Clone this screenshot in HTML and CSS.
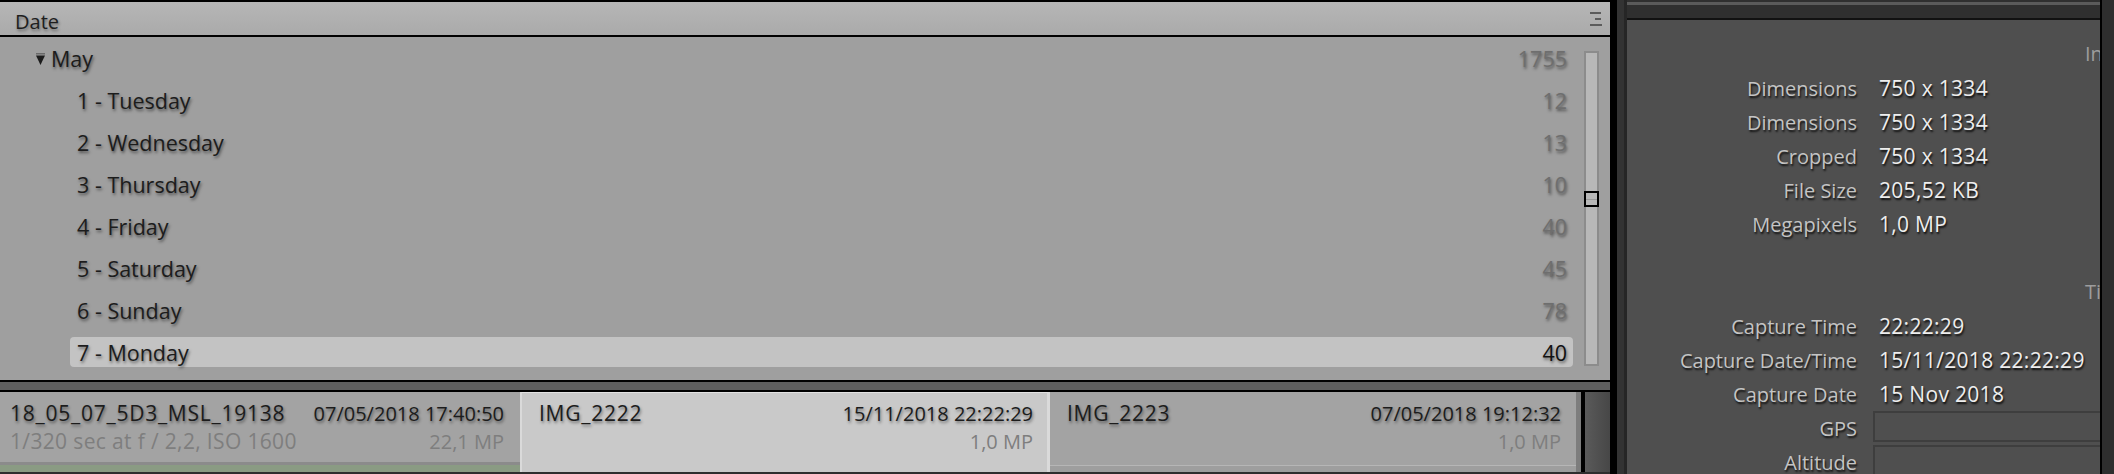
FILE: index.html
```html
<!DOCTYPE html>
<html>
<head>
<link rel="stylesheet" href="styles.css">
</head>
<body>

<div class="app">
    <div class="library">
        <div class="filter-head">
            <span>Date</span>
            <svg class="menu-icon" width="12" height="14" viewBox="0 0 12 14">
                <rect x="0" y="0" width="11" height="2" fill="#5c5c5c"/>
                <rect x="5" y="6" width="6" height="2" fill="#5c5c5c"/>
                <rect x="0" y="12" width="12" height="2" fill="#5c5c5c"/>
            </svg>
        </div>

        <div class="date-list">
            <div class="rows">
                <div class="row month">
                    <span class="label">
                        <svg class="twisty" width="9" height="12" viewBox="0 0 9 12">
                            <rect x="0" y="0" width="9" height="1.5" fill="#6a6a6a"/>
                            <polygon points="0,2.5 9,2.5 4.5,12" fill="#1c1c1c"/>
                        </svg>May</span>
                    <span class="count">1755</span>
                </div>
                <div class="row"><span class="label">1 - Tuesday</span><span class="count">12</span></div>
                <div class="row"><span class="label">2 - Wednesday</span><span class="count">13</span></div>
                <div class="row"><span class="label">3 - Thursday</span><span class="count">10</span></div>
                <div class="row"><span class="label">4 - Friday</span><span class="count">40</span></div>
                <div class="row"><span class="label">5 - Saturday</span><span class="count">45</span></div>
                <div class="row"><span class="label">6 - Sunday</span><span class="count">78</span></div>
                <div class="row selected"><span class="label">7 - Monday</span><span class="count">40</span></div>
            </div>
            <div class="scroll">
                <div class="thumb"></div>
            </div>
        </div>

        <div class="split"></div>

        <div class="strip">
            <div class="cell first">
                <div class="cell-line"><span class="name">18_05_07_5D3_MSL_19138</span><span>07/05/2018 17:40:50</span></div>
                <div class="cell-line sub"><span class="exposure">1/320 sec at f / 2,2, ISO 1600</span><span>22,1 MP</span></div>
            </div>
            <div class="cell active">
                <div class="cell-line"><span class="name">IMG_2222</span><span>15/11/2018 22:22:29</span></div>
                <div class="cell-line sub"><span></span><span>1,0 MP</span></div>
            </div>
            <div class="cell last">
                <div class="cell-line"><span class="name">IMG_2223</span><span>07/05/2018 19:12:32</span></div>
                <div class="cell-line sub"><span></span><span>1,0 MP</span></div>
            </div>
            <div class="strip-edge"></div>
        </div>
    </div>

    <div class="divider"></div>

    <div class="info-col">
        <div class="info-top"></div>
        <div class="info-panel">
            <div class="info-section">Info</div>
            <div class="info-row"><span class="info-label">Dimensions</span><span class="info-value">750 x 1334</span></div>
            <div class="info-row"><span class="info-label">Dimensions</span><span class="info-value">750 x 1334</span></div>
            <div class="info-row"><span class="info-label">Cropped</span><span class="info-value">750 x 1334</span></div>
            <div class="info-row"><span class="info-label">File Size</span><span class="info-value">205,52 KB</span></div>
            <div class="info-row"><span class="info-label">Megapixels</span><span class="info-value">1,0 MP</span></div>
            <div class="info-row"></div>
            <div class="info-section">Time</div>
            <div class="info-row"><span class="info-label">Capture Time</span><span class="info-value">22:22:29</span></div>
            <div class="info-row"><span class="info-label">Capture Date/Time</span><span class="info-value">15/11/2018 22:22:29</span></div>
            <div class="info-row"><span class="info-label">Capture Date</span><span class="info-value">15 Nov 2018</span></div>
            <div class="info-row"><span class="info-label">GPS</span><span class="info-box"></span></div>
            <div class="info-row"><span class="info-label">Altitude</span><span class="info-box"></span></div>
        </div>
    </div>

    <div class="edge"></div>
</div>

</body>
</html>
```

FILE: styles.css
```css
body {
    margin: 0;
    background: #2e2e2e;
    font-family: "Open Sans", Arial, sans-serif;
    font-size: 20px;
    overflow: hidden;
}

.app {
    display: flex;
    width: 2114px;
    height: 474px;
    overflow: hidden;
}

/* left column: date filter + filmstrip */

.library {
    width: 1610px;
    display: flex;
    flex-direction: column;
    border-top: 2px solid #000;
}

.filter-head {
    height: 35px;
    border-bottom: 2px solid #000;
    background: linear-gradient(#b6b6b6, #aaaaaa);
    display: flex;
    align-items: center;
    justify-content: space-between;
    padding: 5px 8px 0 15px;
    box-sizing: border-box;
    color: #1e1e1e;
    text-shadow: 1px 2px 3px rgba(0,0,0,0.4);
}

.menu-icon {
    margin-top: -4px;
}

.date-list {
    height: 343px;
    background: #9f9f9f;
    display: flex;
}

.rows {
    flex: 1;
    display: flex;
    flex-direction: column;
}

.row {
    height: 30px;
    margin: 6px 0 6px 70px;
    padding: 0 6px 0 7px;
    display: flex;
    align-items: center;
    justify-content: space-between;
    border-radius: 4px;
    font-size: 21.5px;
    color: #1c1c1c;
    text-shadow: 1px 2px 3px rgba(0,0,0,0.5);
}

.row.month {
    margin-left: 29px;
}

.twisty {
    margin-right: 6px;
    vertical-align: 2px;
}

.count {
    color: #6e6e6e;
}

.row.selected {
    background: #c3c3c3;
}

.row.selected .count {
    color: #111;
}

.scroll {
    width: 15px;
    height: 315px;
    margin: 14px 11px 0 11px;
    box-sizing: border-box;
    border: 2px solid #8c8c8c;
    background: #b8b8b8;
    padding-top: 138px;
}

.thumb {
    height: 16px;
    margin: 0 -2px;
    border: 2px solid #000;
    box-sizing: border-box;
    background: linear-gradient(#b8b8b8 0 6px, #9a9a9a 6px 7px, #b8b8b8 7px);
}

.split {
    height: 8px;
    background: #5e5e5e;
    border-top: 2px solid #000;
    border-bottom: 2px solid #000;
}

.strip {
    height: 80px;
    display: flex;
}

.cell {
    box-sizing: border-box;
    padding-top: 7px;
    color: #1c1c1c;
    text-shadow: 1px 2px 3px rgba(0,0,0,0.45);
}

.cell.first {
    width: 520px;
    padding-left: 10px;
    padding-right: 16px;
    background: linear-gradient(#a3a3a3 0 70px, #8b8b8b 70px 73px, #8a9b83 73px);
}

.cell.active {
    width: 530px;
    padding-left: 17px;
    padding-right: 14px;
    background: #c9c9c9;
    border-left: 2px solid #dadada;
    border-right: 3px solid #dadada;
    border-top: 1px solid #e2e2e2;
    padding-top: 6px;
}

.cell.last {
    width: 526px;
    padding-left: 17px;
    padding-right: 15px;
    background: linear-gradient(#a3a3a3 0 73px, #b6b6b6 73px 74px, #9e9e9e 74px);
}

.cell-line {
    height: 28px;
    display: flex;
    align-items: center;
    justify-content: space-between;
    white-space: nowrap;
}

.cell-line.sub {
    color: #7e7e7e;
    text-shadow: none;
}

.name {
    font-size: 21px;
    letter-spacing: 0.75px;
}

.exposure {
    font-size: 21px;
    letter-spacing: 0.35px;
}

.strip-edge {
    flex: 1;
    background: linear-gradient(to right, #7d7d7d 0 5px, #000 5px 9px, #5a5a5a 9px, #474747);
}

/* middle divider */

.divider {
    width: 17px;
    background: linear-gradient(to right, #000 0 7px, #333 7px 14px, #262626 14px);
}

/* right column: metadata */

.info-col {
    width: 473px;
    display: flex;
    flex-direction: column;
}

.info-top {
    height: 20px;
    background: linear-gradient(#2f2f2f 0 2px, #5a5a5a 2px 5px, #2f2f2f 5px 18px, #111 18px);
}

.info-panel {
    flex: 1;
    background: #4f4f4f;
    padding-top: 17px;
    overflow: hidden;
}

.info-section {
    height: 34px;
    line-height: 34px;
    padding-left: 458px;
    white-space: nowrap;
    color: #9d9d9d;
}

.info-row {
    height: 34px;
    display: flex;
    align-items: center;
    white-space: nowrap;
}

.info-label {
    width: 230px;
    text-align: right;
    color: #c4c4c4;
    text-shadow: 1px 2px 2px rgba(0,0,0,0.8);
}

.info-value {
    margin-left: 22px;
    font-size: 21px;
    letter-spacing: 0.3px;
    color: #eeeeee;
    text-shadow: 1px 2px 2px rgba(0,0,0,0.85);
}

.info-box {
    align-self: flex-start;
    margin-left: 16px;
    height: 31px;
    flex: 1;
    border: 2px solid #3e3e3e;
    border-right: none;
    box-sizing: border-box;
}

.edge {
    flex: 1;
    background: linear-gradient(to right, #000 0 2px, #2e2e2e 2px);
}
```
